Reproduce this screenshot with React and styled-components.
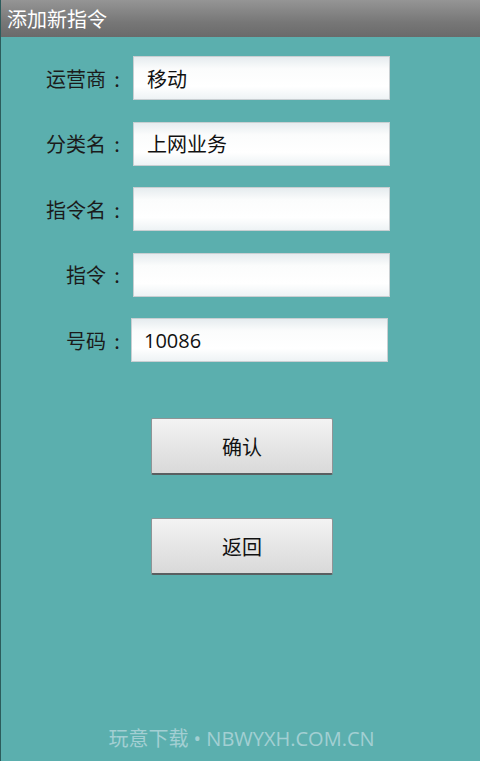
import styled, { createGlobalStyle } from 'styled-components';

const GlobalStyle = createGlobalStyle`
  html, body {
    margin: 0;
    padding: 0;
    background: #5bafae;
  }
  body {
    font-family: "Open Sans", "Noto Sans CJK SC", sans-serif;
  }
`;

const Screen = styled.div`
  width: 480px;
  height: 761px;
  display: flex;
  flex-direction: column;
  background: #5bafae;
  border-left: 1px solid #2c5c5c;
  box-sizing: border-box;
  overflow: hidden;
`;

const TitleBar = styled.div`
  height: 37px;
  display: flex;
  align-items: center;
  padding-left: 7px;
  margin-left: -1px;
  background: linear-gradient(#959595, #777777 60%, #6a6a6a);
  color: #ffffff;
  font-size: 20px;
  line-height: 1;
  font-family: "Noto Sans CJK SC", sans-serif;
`;

const Form = styled.div`
  display: grid;
  grid-template-columns: 124px 257px;
  column-gap: 8px;
  row-gap: 21.5px;
  align-items: center;
  margin-top: 19px;
`;

const Label = styled.div`
  display: flex;
  justify-content: flex-end;
  align-items: center;
  font-size: 20px;
  color: #1b1b1b;
  font-family: "Noto Sans CJK SC", sans-serif;
`;

const Colon = styled.span`
  display: inline-block;
  width: 16px;
  margin-left: 3px;
  text-align: center;
`;

const Field = styled.div`
  width: 257px;
  height: 44px;
  box-sizing: border-box;
  display: flex;
  align-items: center;
  padding-left: ${p => (p.$tight ? 12 : 13)}px;
  margin-left: ${p => (p.$shift ? -2 : 0)}px;
  border: 1px solid #c9cfd2;
  background: linear-gradient(#e6ecef, #fbfcfc 28%, #ffffff 70%, #eef3f5);
  font-size: 20px;
  color: #111111;
  font-family: "Open Sans", "Noto Sans CJK SC", sans-serif;
`;

const Buttons = styled.div`
  display: flex;
  flex-direction: column;
  align-items: center;
  gap: 43px;
  margin-top: 56px;
`;

const Button = styled.div`
  width: 182px;
  height: 57px;
  box-sizing: border-box;
  display: flex;
  align-items: center;
  justify-content: center;
  margin-left: 3px;
  border: 1px solid #8f9496;
  border-bottom: 2px solid #5a5f61;
  border-radius: 2px;
  background: linear-gradient(#f3f3f3, #e6e6e6 50%, #d9d9d9);
  font-size: 20px;
  color: #111111;
  font-family: "Noto Sans CJK SC", sans-serif;
`;

const Watermark = styled.div`
  margin-top: auto;
  margin-bottom: 9px;
  text-align: center;
  padding-left: 2px;
  font-size: 20px;
  color: #a3cfd3;
  font-family: "Open Sans", "Noto Sans CJK SC", sans-serif;
`;

const rows = [
  { label: '运营商', value: '移动' },
  { label: '分类名', value: '上网业务' },
  { label: '指令名', value: '' },
  { label: '指令', value: '' },
  { label: '号码', value: '10086', tight: true, shift: true },
];

export default function App() {
  return (
    <>
      <GlobalStyle />
      <Screen>
        <TitleBar>添加新指令</TitleBar>
        <Form>
          {rows.map(r => [
            <Label key={r.label}>
              {r.label}
              <Colon>:</Colon>
            </Label>,
            <Field key={r.label + '-field'} $tight={r.tight} $shift={r.shift}>
              {r.value}
            </Field>,
          ])}
        </Form>
        <Buttons>
          <Button>确认</Button>
          <Button>返回</Button>
        </Buttons>
        <Watermark>玩意下载 • NBWYXH.COM.CN</Watermark>
      </Screen>
    </>
  );
}
